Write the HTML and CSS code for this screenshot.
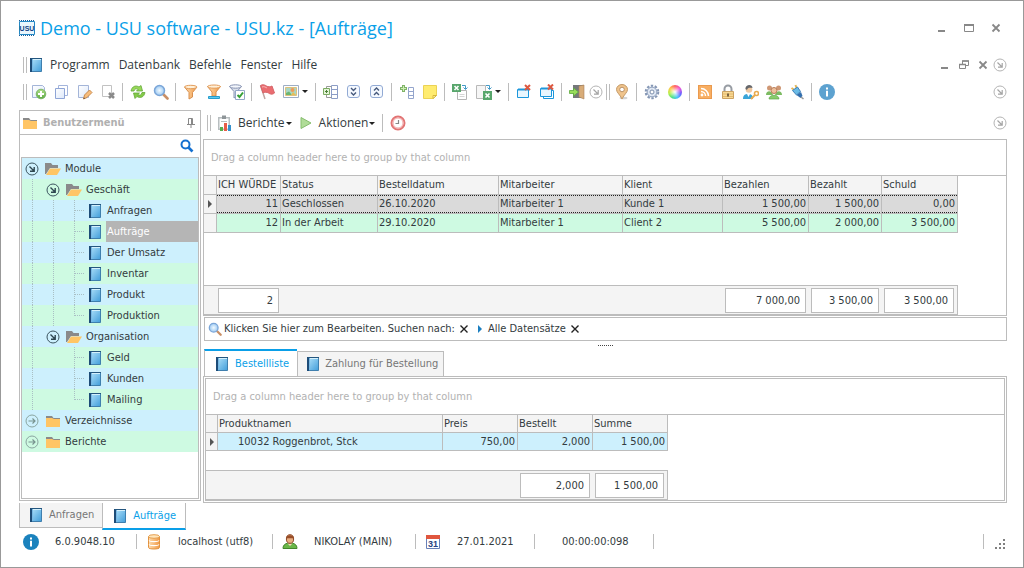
FILE: index.html
```html
<!DOCTYPE html>
<html lang="de">
<head>
<meta charset="utf-8">
<title>Demo - USU software - USU.kz - [Aufträge]</title>
<link rel="stylesheet" href="styles.css">
</head>
<body>
<svg class="defs" aria-hidden="true">
  <defs>
    <linearGradient id="gBlue" x1="0" y1="0" x2="1" y2="1"><stop offset="0" stop-color="#b4e4fb"/><stop offset="1" stop-color="#419dda"/></linearGradient>
    <linearGradient id="gOrange" x1="0" y1="0" x2="1" y2="0"><stop offset="0" stop-color="#ffdcae"/><stop offset="1" stop-color="#f09a48"/></linearGradient>
    <linearGradient id="gPage" x1="0" y1="0" x2="1" y2="1"><stop offset="0" stop-color="#ffffff"/><stop offset="1" stop-color="#dde8fa"/></linearGradient>
    <linearGradient id="gGreen" x1="0" y1="0" x2="0" y2="1"><stop offset="0" stop-color="#b0e08a"/><stop offset="1" stop-color="#5cab40"/></linearGradient>
    <radialGradient id="gGlass"><stop offset="0" stop-color="#f2faff"/><stop offset="1" stop-color="#9cc9f2"/></radialGradient>
  </defs>
  <symbol id="book" viewBox="0 0 14 16"><path d="M1.500 1.500h11v13h-11z" fill="url(#gBlue)" stroke="#3f7fae"/><path d="M1 1h2v14H1z" fill="#1d4c78"/><path d="M3.500 2v12" stroke="#79b9e4"/><path d="M2 1.500h11" stroke="#24567f"/><path d="M4 2.500h8" stroke="#d4f0fc"/></symbol>
  <symbol id="folder" viewBox="0 0 16 16"><path d="M1 3h6l1.500 2H15v3H1z" fill="#8a8a8a"/><path d="M1 5h6l2 1h6v8H1z" fill="#ffc565"/></symbol>
  <symbol id="folder-open" viewBox="0 0 16 16"><path d="M0 2h6l1.500 2H13v3H5L1 13H0z" fill="#8a8a8a"/><path d="M5 7.500h11L12 14H1z" fill="#ffc565"/></symbol>
  <symbol id="toggle-open" viewBox="0 0 14 14"><circle cx="7" cy="7" r="6" fill="none" stroke="#3c5560"/><path d="M4.500 4.500l4.500 4.500M9.200 5v4.200H5" fill="none" stroke="#2e4650" stroke-width="1.400"/></symbol>
  <symbol id="toggle-closed" viewBox="0 0 14 14"><circle cx="7" cy="7" r="6" fill="none" stroke="#8aa5a0"/><path d="M3.500 7h6.500M7.500 4.500L10 7l-2.500 2.500" fill="none" stroke="#78938f" stroke-width="1.200"/></symbol>
  <symbol id="more" viewBox="0 0 14 14"><circle cx="7" cy="7" r="6" fill="none" stroke="#b4b4b4"/><path d="M4.500 4.500L9 9M9.200 5v4.200H5" fill="none" stroke="#a4a4a4" stroke-width="1.200"/></symbol>
  <symbol id="page-add" viewBox="0 0 16 16"><path d="M1.500 1.500h10l2 2v10h-12z" fill="url(#gPage)" stroke="#a4b5d8"/><circle cx="10" cy="10" r="4.800" fill="url(#gGreen)" stroke="#7db56a"/><path d="M7 10h6M10 7v6" stroke="#fff" stroke-width="2"/></symbol>
  <symbol id="copy" viewBox="0 0 16 16"><path d="M4.500 1.500h9v10h-9z" fill="#fff" stroke="#a4b5dc"/><path d="M1.500 4.500h9v10h-9z" fill="url(#gPage)" stroke="#8fa5d6"/></symbol>
  <symbol id="edit" viewBox="0 0 16 16"><path d="M1.500 1.500h10v12h-10z" fill="url(#gPage)" stroke="#a4b5d8"/><path d="M6.500 15l1-4 5-5 2.500 2.500-5 5z" fill="#f8bd7c" stroke="#c98a4c"/><path d="M6.500 15l.5-1.500 1 1z" fill="#444"/></symbol>
  <symbol id="delete" viewBox="0 0 16 16"><path d="M2.500 1.500h9v11h-9z" fill="#fff" stroke="#c2c2c2"/><path d="M9 9l5 5m0-5l-5 5" stroke="#8a8a8a" stroke-width="2.500"/></symbol>
  <symbol id="refresh" viewBox="0 0 16 16"><path d="M1 7c1-5 5-6 8-4l2-1.500L12.500 7H6.500l1.700-1.700C6 4.300 4.500 5 4 7z" fill="#98d858" stroke="#63a83a" stroke-width=".8"/><path d="M15 8.500c-1 5-5 6-8 4L5 14.500 3.500 9h6l-1.700 1.700c2 1 3.700 0 4.200-2.200z" fill="#84ca48" stroke="#63a83a" stroke-width=".8"/></symbol>
  <symbol id="search" viewBox="0 0 16 16"><path d="M10.500 10.500l4 4" stroke="#c98f66" stroke-width="2.600" stroke-linecap="round"/><circle cx="6.500" cy="6.500" r="5" fill="url(#gGlass)" stroke="#7ba6d8" stroke-width="1.500"/></symbol>
  <symbol id="funnel" viewBox="0 0 16 16"><path d="M1.500 3L6 8.500V15l3.500-2V8.500L14 3z" fill="url(#gOrange)" stroke="#d89050"/><ellipse cx="7.700" cy="3" rx="6.200" ry="1.700" fill="#fff0d8" stroke="#e39c5a"/></symbol>
  <symbol id="funnel-bar" viewBox="0 0 16 16"><path d="M1.500 2.500L6 8v4h4V8l4.500-5.500z" fill="url(#gOrange)" stroke="#d89050"/><ellipse cx="8" cy="2.600" rx="6.400" ry="1.600" fill="#fff0d8" stroke="#e39c5a"/><path d="M2.500 12.500h11v2h-11z" fill="#5ccaf0" stroke="#269ccc"/></symbol>
  <symbol id="funnel-check" viewBox="0 0 16 16"><path d="M.5 2.500L5 7.500V14l3-2V7.500l4.500-5z" fill="#dae1ec" stroke="#8793b2"/><ellipse cx="6.500" cy="2.500" rx="5.800" ry="1.700" fill="#f4f7fc" stroke="#8793b2"/><path d="M6.500 6.500h9v9h-9z" fill="#fff" stroke="#94a8c8"/><path d="M8.500 11l2 2 3.500-4.500" stroke="#35a035" stroke-width="2" fill="none"/></symbol>
  <symbol id="flag" viewBox="0 0 16 16"><path d="M1.500 1.500L6 15" stroke="#c0a6a2" stroke-width="1.500"/><path d="M1.500 1.500c2-1.500 4.500-.5 6 .5s4 1 5.500 0l2.500 7c-2.500 2-4.500 1-6 0s-4-1-5.500 0z" fill="#ea6c70" stroke="#d6666a"/><path d="M3 3c2-1 4 .5 5 1" stroke="#f9b6b6" fill="none"/></symbol>
  <symbol id="picture" viewBox="0 0 16 16"><path d="M.5 1.500h15v12H.5z" fill="#fff" stroke="#9eaec4"/><path d="M2.500 3.500h11v8h-11z" fill="#a9d6c4" stroke="#ddc27c"/><path d="M3 9l3-1.500L9 11H3z" fill="#6bb673"/><circle cx="9.500" cy="6" r="2" fill="#ee9a5c"/><path d="M8 11l2-3 3 3z" fill="#e6bd58"/></symbol>
  <symbol id="form-tree" viewBox="0 0 16 16"><path d="M8.500 1.500h6v13h-6zM8.500 5.500h6M8.500 10.500h6" fill="#fff" stroke="#8c9dc6"/><path d="M.5 4.500h6v6h-6z" fill="#e4f5d8" stroke="#7cab62"/><path d="M2 7.500h3M3.500 6v3" stroke="#4c7e38"/><path d="M3.500 2.500h5M3.500 2.500V4M3.500 11v2.500h5" stroke="#999" fill="none"/></symbol>
  <symbol id="expand" viewBox="0 0 16 16"><rect x="1.500" y="1.500" width="12" height="12" rx="2.500" fill="#f5f9ff" stroke="#92aad4"/><path d="M5 4l2.500 2.500L10 4M5 8.500L7.500 11 10 8.500" fill="none" stroke="#46597c" stroke-width="1.400"/></symbol>
  <symbol id="collapse" viewBox="0 0 16 16"><rect x="1.500" y="1.500" width="12" height="12" rx="2.500" fill="#f5f9ff" stroke="#92aad4"/><path d="M5 6.500L7.500 4 10 6.500M5 11l2.500-2.500L10 11" fill="none" stroke="#46597c" stroke-width="1.400"/></symbol>
  <symbol id="row-add" viewBox="0 0 16 16"><path d="M9.500 3.500h5v11h-5zM9.500 7.500h5M9.500 11.500h5" fill="#fff" stroke="#94a5cc"/><path d="M3 1h3v2h2v3H6v2H3V6H1V3h2z" fill="#7fb368"/><path d="M2 4.500h5M4.500 2v5" stroke="#cdeeb4"/></symbol>
  <symbol id="note" viewBox="0 0 16 16"><path d="M1.500 1.500h13v10l-3.500 3H1.500z" fill="#ffec70" stroke="#ebd255"/><path d="M14.500 11.500H11v3z" fill="#fff8b8" stroke="#d8b838"/></symbol>
  <symbol id="xls-in" viewBox="0 0 16 16"><path d="M5.500 6.500h9v9h-9z" fill="#fff" stroke="#b5b5b5"/><path d="M7.500 10.500h5M7.500 12.500h5" stroke="#d5d5d5"/><path d="M0 0h9v8H0z" fill="#58a66c"/><path d="M2.500 2l4 4m0-4l-4 4" stroke="#fff" stroke-width="1.600"/><path d="M10 1.500h3.500V5M11.500 3.500l2 2 2-2" fill="none" stroke="#439ac8"/></symbol>
  <symbol id="xls-out" viewBox="0 0 16 16"><path d="M.5 1.500h9v13h-9z" fill="#f6f6f6" stroke="#b9b9b9"/><path d="M7 7h9v9H7z" fill="#58a66c"/><path d="M9.500 9.500l4 4m0-4l-4 4" stroke="#fff" stroke-width="1.600"/><path d="M10 1.500h3.500V5M11.500 3.500l2 2 2-2" fill="none" stroke="#439ac8"/></symbol>
  <symbol id="win-close" viewBox="0 0 16 16"><path d="M1.500 5.500h11v8h-11z" fill="#e9f7ff" stroke="#1c97dc"/><path d="M2 5.500h11" stroke="#1c97dc" stroke-width="2"/><path d="M9 1l5 5m0-5L9 6" stroke="#dd5840" stroke-width="2"/></symbol>
  <symbol id="wins-close" viewBox="0 0 16 16"><path d="M4.500 6.500h10v8h-10z" fill="#fff" stroke="#1c97dc"/><path d="M1.500 4.500h11v8h-11z" fill="#e9f7ff" stroke="#1c97dc"/><path d="M2 4.500h11" stroke="#1c97dc" stroke-width="2"/><path d="M9 .500l5 5m0-5l-5 5" stroke="#dd5840" stroke-width="2"/></symbol>
  <symbol id="exit" viewBox="0 0 16 16"><path d="M4 1h11v13H4z" fill="#75787b"/><path d="M10 2l5-1v14l-5-2z" fill="#d8ac78" stroke="#a8825a" stroke-width=".6"/><path d="M.5 6.500h4v-2.500l5 4-5 4V9.500h-4z" fill="#98dc5a" stroke="#5ca83e" stroke-width=".8"/></symbol>
  <symbol id="pin-map" viewBox="0 0 16 16"><ellipse cx="9.500" cy="14" rx="4" ry="1.300" fill="#d4d4d4"/><path d="M8 15C6 10.500 2.500 8.500 2.500 5.500a5.500 5 0 0 1 11 0C13.500 8.500 10 10.500 8 15z" fill="#f0c48c" stroke="#c49a68"/><circle cx="8" cy="5.500" r="2.300" fill="#fff" stroke="#b99066"/></symbol>
  <symbol id="gear" viewBox="0 0 16 16"><circle cx="8" cy="8" r="6.300" fill="none" stroke="#8496b4" stroke-width="2" stroke-dasharray="2.400 1.560"/><circle cx="8" cy="8" r="4.900" fill="#dfe7f3" stroke="#8a9cba"/><circle cx="8" cy="8" r="2" fill="#fff" stroke="#7c8eac"/></symbol>
  <symbol id="info" viewBox="0 0 16 16"><circle cx="8" cy="8" r="8" fill="currentColor"/><path d="M7 3.500h2v2H7zM7 6.800h2v5.700H7z" fill="#fff"/></symbol>
  <symbol id="rss" viewBox="0 0 16 16"><rect x="1.500" y="1.500" width="13" height="13" fill="#f8ae62" stroke="#ea9a4e"/><circle cx="5" cy="11" r="1.400" fill="#fff"/><path d="M4 7.500a4.500 4.500 0 0 1 4.500 4.500M4 4.500a7.500 7.500 0 0 1 7.500 7.500" fill="none" stroke="#fff" stroke-width="1.500"/></symbol>
  <symbol id="lock" viewBox="0 0 16 16"><path d="M4.500 8V5a3.500 3.500 0 0 1 7 0v3" fill="none" stroke="#979ca3" stroke-width="2"/><path d="M2.500 7.500h11v7h-11z" fill="#f8d994" stroke="#cca262"/><path d="M3 10h10M3 12.500h10" stroke="#e3b86c"/><path d="M8 9.500v3" stroke="#5d4b30" stroke-width="1.600"/></symbol>
  <symbol id="user-key" viewBox="0 0 16 16"><path d="M0 15c0-4 2-5 5-5s5 1 5 5z" fill="#3ba5d8"/><path d="M4 10l1.500 3L7 10z" fill="#fff"/><circle cx="6" cy="5.500" r="3.300" fill="#f0c8a0"/><path d="M2.500 5C2 0 9.500-.5 9.500 4 7 4 5 3 4 6z" fill="#65676b"/><circle cx="13.500" cy="9.500" r="2" fill="#fff" stroke="#e9ab4e" stroke-width="1.600"/><path d="M12 11l-4 4" stroke="#e9ab4e" stroke-width="2"/></symbol>
  <symbol id="group" viewBox="0 0 16 16"><circle cx="3.500" cy="4" r="2.500" fill="#cf9774"/><circle cx="12.500" cy="4" r="2.500" fill="#cf9774"/><path d="M0 11c0-5 6-5 7 0zM9 11c1-5 7-5 7 0z" fill="#7cbb62"/><circle cx="8" cy="6.500" r="3" fill="#efc09c" stroke="#b67c58"/><path d="M3 15c0-5 10-5 10 0z" fill="#88cc6c" stroke="#62a64e" stroke-width=".7"/></symbol>
  <symbol id="plug" viewBox="0 0 16 16"><path d="M2.500 4l3 2M6.500 1l1 3" stroke="#e4b658" stroke-width="2"/><path d="M3.500 6.500l5-3.500 3 4.500L7.500 11z" fill="#6abbe6" stroke="#3f82ba"/><path d="M7.500 11l4.500-3 1.500 4-2 2z" fill="#336fae"/><path d="M12 13l2.500 2" stroke="#999" stroke-width="1.600"/></symbol>
  <symbol id="report" viewBox="0 0 16 16"><path d="M1 2h12v13H1z" fill="#b8bec0"/><path d="M2.500 3.500h9v10h-9z" fill="#fff"/><path d="M5 .500h4V4H5z" fill="#8e9598"/><path d="M4 6.500h6" stroke="#b8bec0"/><path d="M3 12h3v4H3z" fill="#5aad4c"/><path d="M7 8h3v8H7z" fill="#e85b48"/><path d="M11 10h3v6h-3z" fill="#3691cc"/></symbol>
  <symbol id="play" viewBox="0 0 16 16"><path d="M3 2.500l10 5.500-10 5.500z" fill="#b0dc98" stroke="#86bd6e"/></symbol>
  <symbol id="clock" viewBox="0 0 16 16"><circle cx="8" cy="8" r="6.500" fill="#fff" stroke="#e27474" stroke-width="2"/><circle cx="8" cy="8" r="5" fill="none" stroke="#f3a9a9"/><path d="M8.500 5v3.500H5.500" fill="none" stroke="#888" stroke-width="1.200"/></symbol>
  <symbol id="database" viewBox="0 0 16 16"><path d="M2.500 2.500v11c0 2 11 2 11 0v-11z" fill="url(#gOrange)" stroke="#e2923e"/><ellipse cx="8" cy="2.500" rx="5.500" ry="1.800" fill="#ffe6bc" stroke="#e59e4e"/><path d="M3 6.500c1 1.500 9 1.500 10 0M3 10.500c1 1.500 9 1.500 10 0" fill="none" stroke="#fff" stroke-width="1.200"/></symbol>
  <symbol id="user" viewBox="0 0 16 16"><path d="M1 14.500c0-4 3-5.500 7-5.500s7 1.500 7 5.500z" fill="#6ab648" stroke="#43862c"/><path d="M5.500 9.500L8 12l2.500-2.500z" fill="#f4dab8"/><ellipse cx="8" cy="5" rx="3.600" ry="4.300" fill="#e8ae82" stroke="#8c4a28"/><path d="M4 4.500C4 0 12 0 12 4.500c-3-.5-5-.5-8 0z" fill="#9a4e28"/></symbol>
</svg>

<div class="window">
  <header class="titlebar">
    <svg class="logo" viewBox="0 0 16 16" aria-hidden="true"><path d="M0 .500h16M0 15.500h16" stroke="#1b5d9c" stroke-dasharray="1 1"/><path d="M.5 1.500h15v13H.5z" fill="#eaf6fd" stroke="#2488c4"/><text x="8" y="10.500" text-anchor="middle" class="logo-text">USU</text></svg>
    <h1>Demo - USU software - USU.kz - [Aufträge]</h1>
    <div class="window-buttons">
      <button aria-label="Minimieren"><svg viewBox="0 0 10 10"><path d="M1 8h7" stroke="#888" stroke-width="2"/></svg></button>
      <button aria-label="Maximieren"><svg viewBox="0 0 10 10"><path d="M.5 2v6.500h9V2" fill="none" stroke="#888"/><path d="M0 2h10" stroke="#888" stroke-width="2"/></svg></button>
      <button aria-label="Schließen"><svg viewBox="0 0 10 10"><path d="M1.500 1.500l7 7m0-7l-7 7" stroke="#888" stroke-width="1.800"/></svg></button>
    </div>
  </header>

  <div class="bar menubar">
    <span class="grip"></span>
    <svg class="book" aria-hidden="true"><use href="#book"/></svg>
    <nav class="menus">
      <button>Programm</button><button>Datenbank</button><button>Befehle</button><button>Fenster</button><button>Hilfe</button>
    </nav>
    <div class="child-buttons">
      <button aria-label="Minimieren"><svg viewBox="0 0 10 10"><path d="M1 8h7" stroke="#888" stroke-width="2"/></svg></button>
      <button aria-label="Wiederherstellen"><svg viewBox="0 0 10 10"><path d="M3.500 4V1h6v4.500H7M.5 4.500h6v4h-6z" fill="none" stroke="#888"/><path d="M3 1h7M0 4.500h7" stroke="#888" stroke-width="1.600"/></svg></button>
      <button aria-label="Schließen"><svg viewBox="0 0 10 10"><path d="M1.500 1.500l7 7m0-7l-7 7" stroke="#888" stroke-width="1.800"/></svg></button>
    </div>
    <button class="more" aria-label="Mehr"><svg><use href="#more"/></svg></button>
  </div>

  <div class="bar toolbar">
    <span class="grip"></span>
    <button class="tool" aria-label="Hinzufügen"><svg><use href="#page-add"/></svg></button>
    <button class="tool" aria-label="Kopieren"><svg><use href="#copy"/></svg></button>
    <button class="tool" aria-label="Bearbeiten"><svg><use href="#edit"/></svg></button>
    <button class="tool" aria-label="Löschen"><svg><use href="#delete"/></svg></button>
    <span class="sep"></span>
    <button class="tool" aria-label="Aktualisieren"><svg><use href="#refresh"/></svg></button>
    <button class="tool" aria-label="Suchen"><svg><use href="#search"/></svg></button>
    <span class="sep"></span>
    <button class="tool" aria-label="Filter"><svg><use href="#funnel"/></svg></button>
    <button class="tool" aria-label="Filterzeile"><svg><use href="#funnel-bar"/></svg></button>
    <button class="tool" aria-label="Filter wählen"><svg><use href="#funnel-check"/></svg></button>
    <span class="sep"></span>
    <button class="tool" aria-label="Markieren"><svg><use href="#flag"/></svg></button>
    <button class="tool drop" aria-label="Bild"><svg><use href="#picture"/></svg></button>
    <span class="sep"></span>
    <button class="tool" aria-label="Gruppieren"><svg><use href="#form-tree"/></svg></button>
    <button class="tool" aria-label="Ausklappen"><svg><use href="#expand"/></svg></button>
    <button class="tool" aria-label="Einklappen"><svg><use href="#collapse"/></svg></button>
    <span class="sep"></span>
    <button class="tool" aria-label="Zeile hinzufügen"><svg><use href="#row-add"/></svg></button>
    <button class="tool" aria-label="Notiz"><svg><use href="#note"/></svg></button>
    <span class="sep"></span>
    <button class="tool" aria-label="Import"><svg><use href="#xls-in"/></svg></button>
    <button class="tool drop" aria-label="Export"><svg><use href="#xls-out"/></svg></button>
    <span class="sep"></span>
    <button class="tool" aria-label="Fenster schließen"><svg><use href="#win-close"/></svg></button>
    <button class="tool" aria-label="Alle Fenster schließen"><svg><use href="#wins-close"/></svg></button>
    <span class="sep"></span>
    <button class="tool" aria-label="Beenden"><svg><use href="#exit"/></svg></button>
    <button class="more inner" aria-label="Mehr"><svg><use href="#more"/></svg></button>
    <span class="grip"></span>
    <button class="tool" aria-label="Karte"><svg><use href="#pin-map"/></svg></button>
    <span class="sep"></span>
    <button class="tool" aria-label="Einstellungen"><svg><use href="#gear"/></svg></button>
    <button class="tool" aria-label="Farben"><span class="wheel"></span></button>
    <span class="sep"></span>
    <button class="tool" aria-label="RSS"><svg><use href="#rss"/></svg></button>
    <button class="tool" aria-label="Sperren"><svg><use href="#lock"/></svg></button>
    <button class="tool" aria-label="Zugriffsrechte"><svg><use href="#user-key"/></svg></button>
    <button class="tool" aria-label="Benutzer"><svg><use href="#group"/></svg></button>
    <button class="tool" aria-label="Verbindung"><svg><use href="#plug"/></svg></button>
    <span class="sep"></span>
    <button class="tool light" aria-label="Info"><svg><use href="#info"/></svg></button>
    <button class="more" aria-label="Mehr"><svg><use href="#more"/></svg></button>
  </div>

  <main class="workspace">
    <aside class="sidebar">
      <div class="side-head">
        <svg class="icon" aria-hidden="true"><use href="#folder"/></svg>
        <h2>Benutzermenü</h2>
        <button class="pin" aria-label="Anheften"><svg viewBox="0 0 8 10"><path d="M1.500 6V.5h4V6M0 6.500h8M4 6v4" fill="none" stroke="#888"/><path d="M5 1v5" stroke="#888" stroke-width="2"/></svg></button>
      </div>
      <div class="side-search">
        <input type="text" aria-label="Suche im Menü">
        <button aria-label="Suchen"><svg viewBox="0 0 14 14"><circle cx="5.500" cy="5.500" r="4" fill="none" stroke="#1470d0" stroke-width="2"/><path d="M8.500 8.500l4 4" stroke="#1470d0" stroke-width="2.600"/></svg></button>
      </div>
      <ul class="tree">
        <li><svg class="toggle"><use href="#toggle-open"/></svg><svg class="icon"><use href="#folder-open"/></svg><a href="#">Module</a></li>
        <li><i class="line"></i><svg class="toggle"><use href="#toggle-open"/></svg><svg class="icon"><use href="#folder-open"/></svg><a href="#">Geschäft</a></li>
        <li><i class="line"></i><i class="line"></i><i class="line branch"></i><svg class="book"><use href="#book"/></svg><a href="#">Anfragen</a></li>
        <li><i class="line"></i><i class="line"></i><i class="line branch"></i><svg class="book"><use href="#book"/></svg><a href="#" class="selected">Aufträge</a></li>
        <li><i class="line"></i><i class="line"></i><i class="line branch"></i><svg class="book"><use href="#book"/></svg><a href="#">Der Umsatz</a></li>
        <li><i class="line"></i><i class="line"></i><i class="line branch"></i><svg class="book"><use href="#book"/></svg><a href="#">Inventar</a></li>
        <li><i class="line"></i><i class="line"></i><i class="line branch"></i><svg class="book"><use href="#book"/></svg><a href="#">Produkt</a></li>
        <li><i class="line"></i><i class="line"></i><i class="line branch last"></i><svg class="book"><use href="#book"/></svg><a href="#">Produktion</a></li>
        <li><i class="line"></i><svg class="toggle"><use href="#toggle-open"/></svg><svg class="icon"><use href="#folder-open"/></svg><a href="#">Organisation</a></li>
        <li><i class="line"></i><i class="line none"></i><i class="line branch"></i><svg class="book"><use href="#book"/></svg><a href="#">Geld</a></li>
        <li><i class="line"></i><i class="line none"></i><i class="line branch"></i><svg class="book"><use href="#book"/></svg><a href="#">Kunden</a></li>
        <li><i class="line"></i><i class="line none"></i><i class="line branch last"></i><svg class="book"><use href="#book"/></svg><a href="#">Mailing</a></li>
        <li><svg class="toggle"><use href="#toggle-closed"/></svg><svg class="icon"><use href="#folder"/></svg><a href="#">Verzeichnisse</a></li>
        <li><svg class="toggle"><use href="#toggle-closed"/></svg><svg class="icon"><use href="#folder"/></svg><a href="#">Berichte</a></li>
      </ul>
    </aside>

    <section class="content">
      <div class="bar actions">
        <span class="grip"></span>
        <button class="action"><svg><use href="#report"/></svg>Berichte</button>
        <button class="action"><svg><use href="#play"/></svg>Aktionen</button>
        <span class="sep"></span>
        <button class="tool" aria-label="Zeitplan"><svg><use href="#clock"/></svg></button>
        <button class="more" aria-label="Mehr"><svg><use href="#more"/></svg></button>
      </div>

      <section class="grid orders">
        <p class="group-hint">Drag a column header here to group by that column</p>
        <table>
          <colgroup><col class="c-mark"><col class="c-id"><col class="c-status"><col class="c-date"><col class="c-staff"><col class="c-client"><col class="c-due"><col class="c-paid"><col class="c-debt"></colgroup>
          <thead><tr><th></th><th>ICH WÜRDE</th><th>Status</th><th>Bestelldatum</th><th>Mitarbeiter</th><th>Klient</th><th>Bezahlen</th><th>Bezahlt</th><th>Schuld</th></tr></thead>
          <tbody>
            <tr class="current"><th><span class="marker"></span></th><td class="num">11</td><td>Geschlossen</td><td>26.10.2020</td><td>Mitarbeiter 1</td><td>Kunde 1</td><td class="num">1 500,00</td><td class="num">1 500,00</td><td class="num">0,00</td></tr>
            <tr class="green"><th></th><td class="num">12</td><td>In der Arbeit</td><td>29.10.2020</td><td>Mitarbeiter 1</td><td>Client 2</td><td class="num">5 500,00</td><td class="num">2 000,00</td><td class="num">3 500,00</td></tr>
          </tbody>
        </table>
        <div class="summary">
          <output class="s-count">2</output>
          <output class="s-due">7 000,00</output>
          <output class="s-paid">3 500,00</output>
          <output class="s-debt">3 500,00</output>
        </div>
      </section>

      <div class="filterbar">
        <svg class="icon small" viewBox="0 0 16 16" aria-hidden="true"><use href="#search"/></svg>
        <a href="#">Klicken Sie hier zum Bearbeiten. Suchen nach:</a>
        <button class="clear" aria-label="Suche löschen"><svg viewBox="0 0 10 10"><path d="M1.500 1.500l7 7m0-7l-7 7" stroke="#222" stroke-width="1.400"/></svg></button>
        <span class="arrow"></span>
        <a href="#">Alle Datensätze</a>
        <button class="clear" aria-label="Filter löschen"><svg viewBox="0 0 10 10"><path d="M1.500 1.500l7 7m0-7l-7 7" stroke="#222" stroke-width="1.400"/></svg></button>
      </div>
      <div class="splitter"><span></span></div>

      <div class="detail-tabs" role="tablist">
        <button role="tab" aria-selected="true" class="active"><svg class="book"><use href="#book"/></svg>Bestellliste</button>
        <button role="tab" aria-selected="false"><svg class="book"><use href="#book"/></svg>Zahlung für Bestellung</button>
      </div>
      <div class="detail">
        <section class="grid items">
          <p class="group-hint">Drag a column header here to group by that column</p>
          <table>
            <colgroup><col class="c-mark2"><col class="c-product"><col class="c-sum"><col class="c-sum"><col class="c-sum"></colgroup>
            <thead><tr><th></th><th>Produktnamen</th><th>Preis</th><th>Bestellt</th><th>Summe</th></tr></thead>
            <tbody><tr class="blue"><th><span class="marker"></span></th><td class="indent">10032 Roggenbrot, Stck</td><td class="num">750,00</td><td class="num">2,000</td><td class="num">1 500,00</td></tr></tbody>
          </table>
          <div class="summary">
            <output class="s-qty">2,000</output>
            <output class="s-total">1 500,00</output>
          </div>
        </section>
      </div>
    </section>
  </main>

  <div class="doc-tabs" role="tablist">
    <button role="tab" aria-selected="false"><svg class="book"><use href="#book"/></svg>Anfragen</button>
    <button role="tab" aria-selected="true" class="active"><svg class="book"><use href="#book"/></svg>Aufträge</button>
  </div>
  <footer class="status">
    <div class="st-version"><svg class="icon strong"><use href="#info"/></svg><span>6.0.9048.10</span></div>
    <div class="st-host"><svg class="icon"><use href="#database"/></svg><span>localhost (utf8)</span></div>
    <div class="st-user"><svg class="icon"><use href="#user"/></svg><span>NIKOLAY (MAIN)</span></div>
    <div class="st-date"><svg class="icon" viewBox="0 0 16 16"><path d="M1.500 1.500h13v13h-13z" fill="#fff" stroke="#6880b8"/><path d="M1 1h14v4H1z" fill="#e0563e"/><text x="8" y="13" text-anchor="middle" class="cal-text">31</text></svg><span>27.01.2021</span></div>
    <div class="st-time"><span>00:00:00:098</span></div>
    <div class="st-rest"></div>
    <svg class="resize" viewBox="0 0 11 11" aria-hidden="true"><path d="M8 1h2v2H8zM4 5h2v2H4zM8 5h2v2H8zM0 9h2v2H0zM4 9h2v2H4zM8 9h2v2H8z" fill="#808080"/></svg>
  </footer>
</div>
</body>
</html>
```
FILE: styles.css
```css
* { box-sizing: border-box; }

:root {
  --ui: "DejaVu Sans Condensed", "DejaVu Sans", sans-serif;
  --head: "Open Sans", "Noto Sans", sans-serif;
  --line: #bcbcbc;
  --accent: #0a9fe8;
  --blue: #cdf0fd;
  --green: #cefae2;
  --panel: #f4f4f4;
  --text: #333b40;
}

body { margin: 0; font: 11px/14px var(--ui); color: var(--text); background: #fff; }
button { display: flex; align-items: center; padding: 0; border: 0; background: none; font: inherit; color: inherit; white-space: nowrap; }
a { color: inherit; text-decoration: none; }
svg { display: block; flex: none; }
.defs { position: absolute; width: 0; height: 0; }

.window { display: flex; flex-direction: column; min-height: 100vh; padding: 0 16px 14px 18px; border: 1px solid #999; }
.icon { width: 16px; height: 16px; }
.book { width: 14px; height: 16px; }

/* Title */
.titlebar { display: flex; align-items: center; height: 50px; padding-top: 4px; }
.logo { width: 16px; height: 16px; }
.logo-text { font: bold 7px "Liberation Sans", sans-serif; fill: #123f82; }
h1 { flex: 1; margin: 0 0 0 5px; font: 400 18px/24px var(--head); color: var(--accent); }
.window-buttons { display: flex; gap: 17px; padding-right: 6px; }
.window-buttons svg, .child-buttons svg { width: 10px; height: 10px; }

/* Bars */
.bar { display: flex; align-items: center; height: 27px; }
.grip { width: 4px; height: 16px; border: solid var(--line); border-width: 0 1px; }
.sep { width: 1px; height: 18px; margin: 0 3px; background: var(--line); }
.menubar { padding-left: 4px; font: 12px/16px var(--head); }
.menubar .book { margin-left: 2px; }
.menus { display: flex; flex: 1; gap: 9px; margin-left: 7px; }
.child-buttons { display: flex; gap: 9px; margin-right: 5px; }
.more { margin-left: auto; }
.more svg { width: 14px; height: 14px; }
.more.inner { margin: 0 3px 0 1px; }
.menubar .more { margin-left: 0; }
.toolbar { padding-left: 4px; }
.tool { justify-content: center; width: 23px; height: 22px; }
.tool svg, .action svg { width: 16px; height: 16px; }
.drop { width: 34px; gap: 3px; }
.drop::after, .action::after { content: ""; border: 3px solid transparent; border-top-color: #222; border-bottom: 0; }
.light { color: #5da2d0; }
.wheel { width: 14px; height: 14px; border-radius: 50%; background: radial-gradient(#fff, transparent 60%), conic-gradient(#ff6060, #f058d8, #7058ff, #48c0ff, #48e090, #b8f048, #ffc848, #ff6060); }

/* Layout */
.workspace { display: flex; flex: 1; gap: 2px; margin-top: 5px; }
.sidebar { display: flex; flex: none; flex-direction: column; width: 182px; margin-bottom: 2px; padding: 0 1px 1px; border: 1px solid var(--line); }
.content { display: flex; flex: 1; flex-direction: column; min-width: 0; }

/* Sidebar */
.side-head { display: flex; align-items: center; height: 24px; padding: 0 5px 0 2px; margin: 0 -1px; border-bottom: 1px solid var(--line); }
h2 { flex: 1; margin: 0 0 0 5px; font: bold 11px/14px var(--ui); color: #b0b0b0; }
.pin svg { width: 8px; height: 10px; }
.side-search { display: flex; align-items: center; height: 22px; padding-right: 5px; }
.side-search input { flex: 1; min-width: 0; border: 0; outline: 0; font: inherit; }
.side-search svg { width: 14px; height: 14px; }
.tree { flex: 1; margin: 0; padding: 0; border: 1px solid var(--line); list-style: none; }
.tree li { display: flex; align-items: center; height: 21px; background: var(--blue); }
.tree li:nth-child(even) { background: var(--green); }
.tree a { flex: 1; padding: 0 1px; line-height: 21px; }
.tree .selected { color: #fff; background: #b5b5b5; }
.tree .toggle { width: 14px; height: 14px; margin: 0 4px 0 3px; }
.tree .icon { margin: 0 3px 0 2px; }
.tree .book { margin: 0 4px 0 3px; }
.line { position: relative; flex: none; width: 21px; height: 21px; background: repeating-linear-gradient(#a9bfc4 0 1px, transparent 1px 2px) 10px 0 / 1px 100% no-repeat; }
.line.none { background: none; }
.line.last { background-size: 1px 50%; }
.branch::after { content: ""; position: absolute; top: 10px; left: 10px; width: 10px; border-top: 1px dotted #a9bfc4; }

/* Actions */
.actions { height: 29px; padding: 0 0 3px 4px; font: 12px/16px var(--head); }
.action { gap: 5px; margin-right: 6px; }
.action:first-of-type { margin-left: 6px; }
.action::after { margin-left: -4px; }
.action + .sep { margin-left: 1px; }

/* Grids */
.grid { display: flex; flex-direction: column; border: 1px solid var(--line); }
.orders { flex: none; height: 177px; }
.group-hint { height: 36px; margin: 0; padding: 0 7px; border-bottom: 1px solid var(--line); line-height: 35px; color: #b2b2b2; }
table { border-spacing: 0; table-layout: fixed; width: 0; }
th, td { height: 19px; padding: 0 1px; border: solid var(--line); border-width: 0 1px 1px 0; font-weight: 400; text-align: left; line-height: 18px; white-space: nowrap; }
th { background: var(--panel); }
.num { padding-right: 2px; text-align: right; }
.indent { padding-left: 20px; }
.green td { background: var(--green); }
.blue td { background: var(--blue); }
.current td { background:
  repeating-linear-gradient(90deg, #222 0 1px, transparent 1px 2px) top / 100% 1px no-repeat,
  repeating-linear-gradient(90deg, #222 0 1px, transparent 1px 2px) bottom / 100% 1px no-repeat, #dadada; }
.marker { display: block; width: 0; margin: 0 auto; border: 4px solid transparent; border-left-color: #555; border-right: 0; }
.c-mark { width: 13px; } .c-id { width: 64px; } .c-status { width: 97px; } .c-date { width: 121px; }
.c-staff { width: 124px; } .c-client { width: 100px; } .c-due { width: 86px; } .c-paid { width: 73px; } .c-debt { width: 76px; }
.c-mark2 { width: 12px; } .c-product { width: 225px; } .c-sum { width: 75px; }
.summary { display: grid; align-items: center; height: 30px; margin-top: auto; border: solid var(--line); border-width: 1px 1px 1px 0; background: var(--panel); }
.orders .summary { grid-template-columns: 77px 97px 121px 124px 100px 86px 73px 75px; width: 754px; }
.items .summary { grid-template-columns: 237px 75px 75px 74px; width: 462px; }
.summary output { height: 25px; margin: 0 3px 0 2px; padding-right: 5px; border: 1px solid var(--line); background: #fff; text-align: right; line-height: 23px; }
.summary .s-count { margin-left: 14px; margin-right: 2px; }
.s-due { grid-column: 6; } .s-paid { grid-column: 7; } .s-debt { grid-column: 8; }
.s-qty { grid-column: 3; } .s-total { grid-column: 4; }

/* Filter */
.filterbar { display: flex; align-items: center; height: 24px; margin: 1px 0 0 1px; padding-left: 3px; border: 1px solid var(--line); }
.filterbar .small { width: 14px; height: 14px; margin-right: 2px; }
.clear { margin-left: 4px; }
.clear svg { width: 10px; height: 10px; }
.arrow { margin: 0 6px 0 9px; border: 4px solid transparent; border-left-color: #1c7fc0; border-right: 0; }
.splitter { display: flex; align-items: center; justify-content: center; height: 8px; }
.splitter span { width: 15px; border-top: 1px dotted #444; }

/* Detail */
.detail-tabs { display: flex; align-items: flex-end; margin-left: 1px; }
.detail-tabs button { gap: 5px; height: 25px; padding: 0 5px 0 8px; border: 1px solid var(--line); border-bottom: 0; color: #777; background: var(--panel); }
.detail-tabs .active { gap: 6px; height: 27px; padding: 0 8px 0 10px; border-top: 2px solid var(--accent); color: var(--accent); background: #fff; border-right: 0; }
.detail { display: flex; flex: 1; padding: 1px; border: 1px solid var(--line); }
.items { flex: 1; min-width: 0; }
.items th, .items td { height: 18px; line-height: 17px; }

/* Bottom */
.doc-tabs { display: flex; }
.doc-tabs button { gap: 6px; height: 25px; padding: 0 8px 0 9px; border: solid var(--line); border-width: 0 0 1px 1px; color: #777; background: var(--panel); }
.doc-tabs .active { height: 27px; padding: 0 9px 0 10px; border-width: 0 1px 2px; border-bottom-color: var(--accent); color: var(--accent); background: #fff; }
.status { display: flex; align-items: center; height: 23px; }
.status > div { display: flex; align-items: center; height: 15px; border-right: 1px solid var(--line); }
.st-version { width: 118px; padding-left: 4px; gap: 16px; }
.st-host { width: 136px; padding-left: 9px; gap: 16px; }
.st-user { width: 143px; padding-left: 9px; gap: 16px; }
.st-date { width: 119px; padding-left: 9px; gap: 16px; }
.st-time { width: 119px; padding-left: 27px; }
.st-rest { flex: 1; }
.strong { color: #1b82bd; }
.cal-text { font: bold 9px "Liberation Sans", sans-serif; fill: #2a4480; }
.resize { width: 11px; height: 11px; margin: 4px 1px 0 11px; }
```
